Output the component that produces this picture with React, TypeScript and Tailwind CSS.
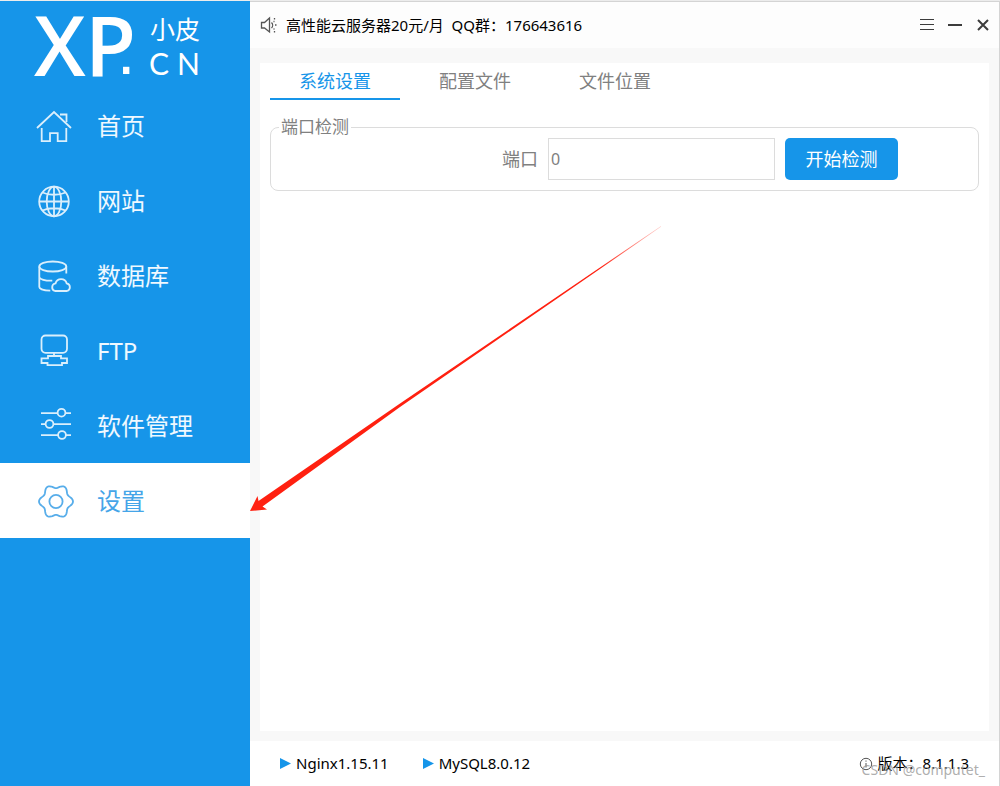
import { useState } from "react";
import type { ReactNode } from "react";
import clsx from "clsx";

// six-lobed outline for the settings gear
const gearPath = () => {
  const points: string[] = [];
  for (let deg = 0; deg < 360; deg += 4) {
    const a = (deg * Math.PI) / 180;
    const r = 15.2 + 1.8 * Math.cos(6 * a);
    points.push(`${(20 + r * Math.cos(a)).toFixed(2)} ${(18.5 + r * Math.sin(a)).toFixed(2)}`);
  }
  return `M${points.join("L")}Z`;
};

const HomeIcon = () => (
  <>
    <path d="M1 20 18 4l17 16" />
    <path d="M24 6.5h6.5V14" />
    <path d="M5.7 20v13.2H14v-8h7.7v8h8.6V20" />
  </>
);

const GlobeIcon = () => (
  <>
    <circle cx="18" cy="18.5" r="14.8" />
    <ellipse cx="18" cy="18.5" rx="7.3" ry="14.8" />
    <path d="M18 3.7v29.6M3.2 18.5h29.6M6.5 9.5c6.5 3 16.5 3 23 0M6.5 27.5c6.5-3 16.5-3 23 0" />
  </>
);

const DatabaseIcon = () => (
  <>
    <ellipse cx="16.8" cy="8.5" rx="13.5" ry="5" />
    <path d="M3.3 8.5v20.5c0 2 5 3.5 11 3.7M3.3 19.5c1.5 2.3 7 3.3 13 3.2M30.3 8.5V15.5" />
    <path d="M19 33a3.9 3.9 0 0 1 .5-7.6a5.8 5.8 0 0 1 11.2 0A3.9 3.9 0 0 1 31 33z" />
  </>
);

const FtpIcon = () => (
  <>
    <rect x="5.5" y="2.5" width="25.5" height="17.3" rx="4" />
    <path d="M18 19.8V23M12 23h13v2.3h6v4.7h-5v2.2H11.5V30h-6v-4.7H12z" />
  </>
);

const SlidersIcon = () => (
  <>
    <path d="M5 5.2h16.5M29.5 5.2H35M5 16.2h4.5M17.5 16.2H35M5 27.2h17M30 27.2h5" />
    <circle cx="25.5" cy="4.7" r="3.9" />
    <circle cx="13.5" cy="16" r="3.9" />
    <circle cx="26" cy="27" r="3.9" />
  </>
);

const GearIcon = () => (
  <>
    <path d={gearPath()} />
    <circle cx="20" cy="18.5" r="6.6" />
  </>
);

const navItems: { id: string; label: string; icon: ReactNode }[] = [
  { id: "home", label: "首页", icon: <HomeIcon /> },
  { id: "site", label: "网站", icon: <GlobeIcon /> },
  { id: "database", label: "数据库", icon: <DatabaseIcon /> },
  { id: "ftp", label: "FTP", icon: <FtpIcon /> },
  { id: "software", label: "软件管理", icon: <SlidersIcon /> },
  { id: "settings", label: "设置", icon: <GearIcon /> },
];

const tabs = ["系统设置", "配置文件", "文件位置"];
const services = ["Nginx1.15.11", "MySQL8.0.12"];

function Sidebar() {
  const [active, setActive] = useState("settings");

  return (
    <aside className="w-[250px] shrink-0 bg-[#1695e9]">
      <svg viewBox="0 0 250 87" className="block w-full overflow-visible fill-white" role="img" aria-label="XP.CN 小皮">
        <text x="34" y="75" fontSize="83" fontWeight="600" fontFamily="'Open Sans', sans-serif">X</text>
        <text x="85" y="75" fontSize="83" fontWeight="600" fontFamily="'Open Sans', sans-serif">P</text>
        <text x="117" y="73" fontSize="66" fontFamily="'Liberation Sans', sans-serif">.</text>
        <text x="150" y="38" fontSize="25" fontFamily="'Noto Sans CJK SC', sans-serif">小皮</text>
        <text x="149" y="74" fontSize="30" fontFamily="Lato, sans-serif">C</text>
        <text x="177" y="74" fontSize="30" fontFamily="Lato, sans-serif">N</text>
      </svg>
      <nav>
        {navItems.map(item => (
          <a
            key={item.id}
            href={`#${item.id}`}
            onClick={() => setActive(item.id)}
            aria-current={active === item.id ? "page" : undefined}
            className={clsx(
              "flex h-[75px] items-center gap-[25px] pl-9 text-2xl",
              active === item.id ? "bg-white text-[#45a5e8]" : "text-sky-50"
            )}
          >
            <svg
              viewBox="0 0 36 36"
              className="size-9 overflow-visible opacity-90"
              fill="none"
              stroke="currentColor"
              strokeWidth="1.8"
              aria-hidden="true"
            >
              {item.icon}
            </svg>
            {item.label}
          </a>
        ))}
      </nav>
    </aside>
  );
}

function TitleBar() {
  return (
    <header className="flex h-[46px] items-center bg-[#fdfdfd] pr-1.5 pl-2.5">
      <svg viewBox="0 0 18 18" className="mr-2 size-[18px]" fill="none" stroke="#555" strokeWidth="1.3" aria-hidden="true">
        <path d="M1.5 6.5h3L9.5 2v14L4.5 12h-3z" />
        <path d="M11.5 6.5c1.5 1.5 1.5 4 0 5.500" />
        <path d="M14.5 2v1.5M13.5 5.5h1M15 9h1.5M13.5 13h1M14.5 15v1.5" />
      </svg>
      <p className="text-[15px] whitespace-pre text-black">高性能云服务器20元/月  QQ群：176643616</p>
      <div className="ml-auto flex gap-2 text-[#3c3c3c]">
        <button type="button" aria-label="菜单" className="size-5">
          <svg viewBox="0 0 20 20" fill="none" stroke="currentColor">
            <path d="M3 4.5h14M3 9.5h14M3 14.5h14" />
          </svg>
        </button>
        <button type="button" aria-label="最小化" className="size-5">
          <svg viewBox="0 0 20 20" fill="none" stroke="currentColor" strokeWidth="2">
            <path d="M3 10h14" />
          </svg>
        </button>
        <button type="button" aria-label="关闭" className="size-5">
          <svg viewBox="0 0 20 20" fill="none" stroke="currentColor" strokeWidth="2">
            <path d="M5 5l10 10M15 5L5 15" />
          </svg>
        </button>
      </div>
    </header>
  );
}

function SettingsPanel() {
  const [tab, setTab] = useState(tabs[0]);
  const [port, setPort] = useState("0");

  return (
    <main className="mx-2.5 mt-[15px] mb-2.5 flex-1 bg-white px-2.5">
      <div role="tablist" className="flex gap-2.5">
        {tabs.map(name => (
          <button
            key={name}
            type="button"
            role="tab"
            aria-selected={tab === name}
            onClick={() => setTab(name)}
            className={clsx(
              "h-[37px] w-[130px] border-b-2 text-lg",
              tab === name ? "border-[#1695e9] text-[#1695e9]" : "border-transparent text-[#808080]"
            )}
          >
            {name}
          </button>
        ))}
      </div>

      <fieldset className="mt-4 flex items-center justify-end gap-2.5 rounded-lg border border-[#dcdcdc] pr-20 pb-2.5 text-[#808080]">
        <legend className="ml-2 px-0.5 text-[17px] leading-[22px]">端口检测</legend>
        <label htmlFor="port" className="text-lg">端口</label>
        <input
          id="port"
          value={port}
          onChange={e => setPort(e.target.value)}
          className="h-[42px] w-[227px] border border-[#dcdcdc] px-0.5 text-base outline-none"
        />
        <button type="button" className="h-[42px] w-[113px] rounded-[5px] bg-[#1695e9] text-lg text-white">
          开始检测
        </button>
      </fieldset>
    </main>
  );
}

function StatusBar() {
  return (
    <footer className="relative flex h-[45px] items-center bg-white px-[30px] text-[15px] text-black">
      <ul className="flex gap-[34px]">
        {services.map(name => (
          <li key={name} className="flex items-center gap-[5px]">
            <svg viewBox="0 0 11 11" className="size-[11px] fill-[#1695e9]" aria-hidden="true">
              <path d="M0 0l11 5.5L0 11z" />
            </svg>
            {name}
          </li>
        ))}
      </ul>
      <p className="ml-auto flex items-center gap-[5px]">
        <svg viewBox="0 0 14 14" className="size-3.5" fill="none" stroke="#555" aria-hidden="true">
          <circle cx="7" cy="7" r="5.7" />
          <path d="M7 6v4.5M7 3.5v1.2" />
        </svg>
        版本：8.1.1.3
      </p>
      <span className="absolute right-3.5 bottom-1.5 text-sm text-[#999]/80">CSDN @computet_</span>
    </footer>
  );
}

export default function App() {
  return (
    <div className="relative flex min-h-screen flex-col border-t border-[#ececec] font-['Noto_Sans','Noto_Sans_CJK_SC',sans-serif]">
      <div className="flex flex-1">
        <Sidebar />
        <div className="flex min-w-0 flex-1 flex-col border-t border-r border-[#d4d4d4] bg-[#f8f8f8]">
          <TitleBar />
          <SettingsPanel />
          <StatusBar />
        </div>
      </div>

      {/* Arrow pointing at the active menu entry */}
      <svg
        viewBox="0 0 412 288"
        className="pointer-events-none absolute top-[224px] left-[250px] w-[412px]"
        aria-hidden="true"
      >
        <defs>
          <linearGradient id="arrow-fade" x1="0" x2="1">
            <stop offset="0.85" stopColor="#ff2010" />
            <stop offset="1" stopColor="#ff2010" stopOpacity="0.2" />
          </linearGradient>
        </defs>
        <path d="M0 286L7.5 271L8.5 276L150 178.5L411 1L411 1.8L150 182L12.5 281.5L17 284.5Z" fill="url(#arrow-fade)" />
      </svg>
    </div>
  );
}
